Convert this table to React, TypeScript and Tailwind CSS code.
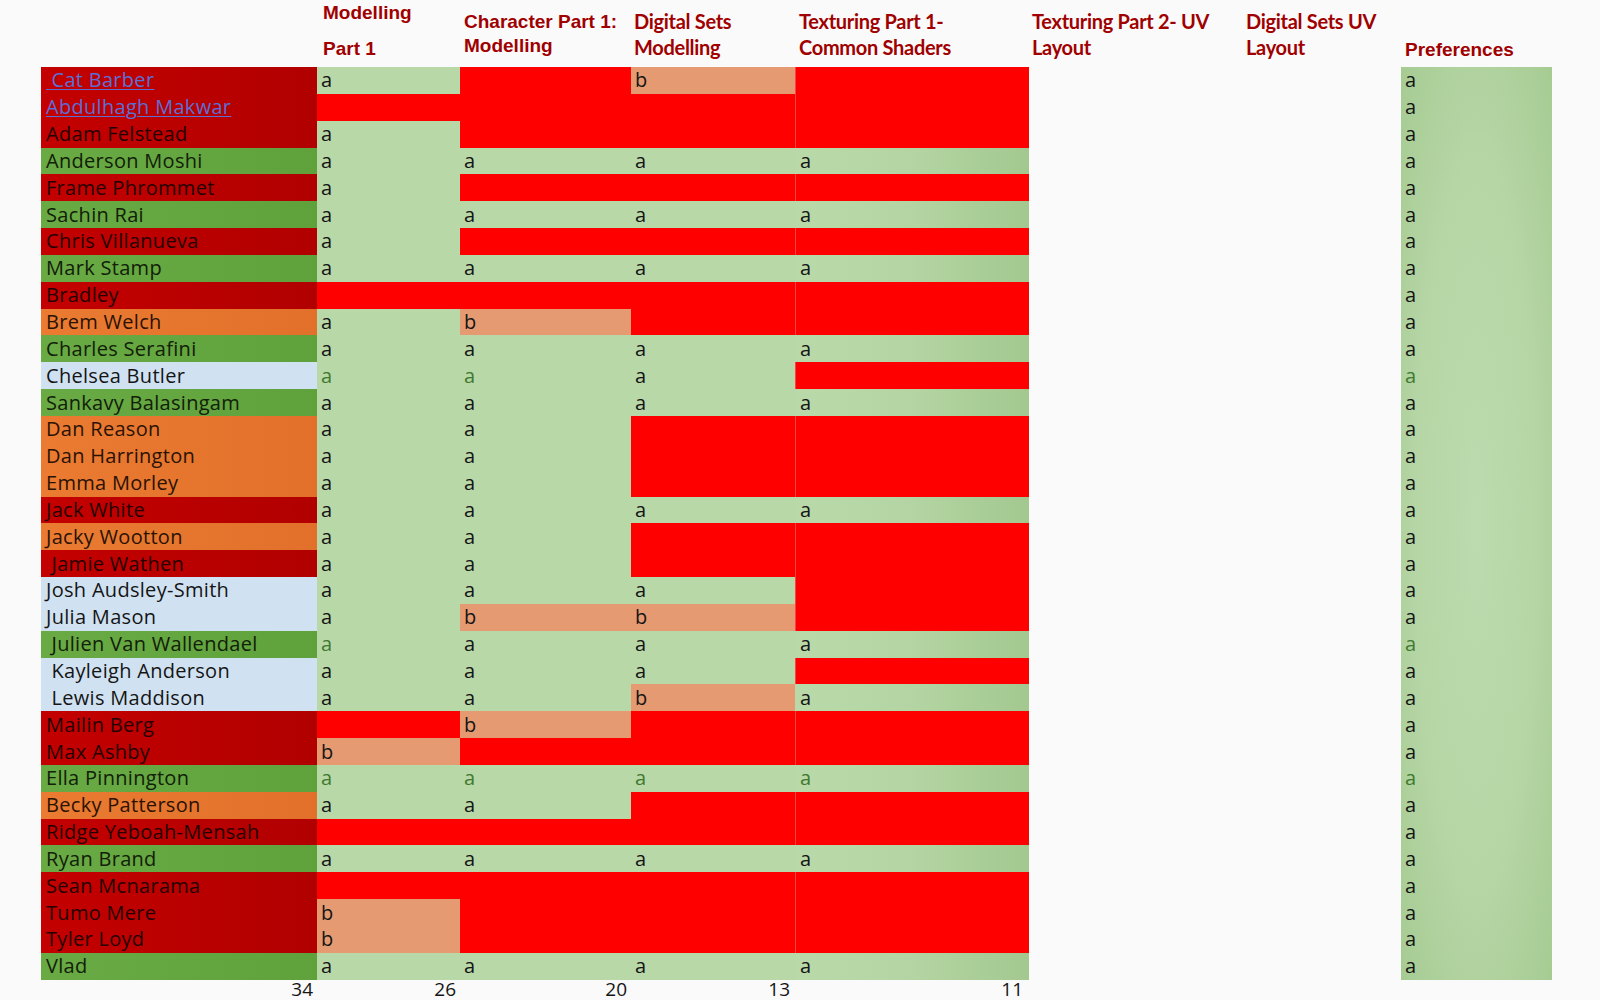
type Tone = 'red' | 'green' | 'orange' | 'blue';

interface Row {
  name: string;
  tone: Tone;
  cells: string; // modelling, character, digital sets, texturing: a / b / r
  link?: boolean;
  soft?: string; // cells whose "a" is printed in a faded green
}

const rows: Row[] = [
  { name: ' Cat Barber', tone: 'red', cells: 'arbr', link: true },
  { name: 'Abdulhagh Makwar', tone: 'red', cells: 'rrrr', link: true },
  { name: 'Adam Felstead', tone: 'red', cells: 'arrr' },
  { name: 'Anderson Moshi', tone: 'green', cells: 'aaaa' },
  { name: 'Frame Phrommet', tone: 'red', cells: 'arrr' },
  { name: 'Sachin Rai', tone: 'green', cells: 'aaaa' },
  { name: 'Chris Villanueva', tone: 'red', cells: 'arrr' },
  { name: 'Mark Stamp', tone: 'green', cells: 'aaaa' },
  { name: 'Bradley', tone: 'red', cells: 'rrrr' },
  { name: 'Brem Welch', tone: 'orange', cells: 'abrr' },
  { name: 'Charles Serafini', tone: 'green', cells: 'aaaa' },
  { name: 'Chelsea Butler', tone: 'blue', cells: 'aaar', soft: '01p' },
  { name: 'Sankavy Balasingam', tone: 'green', cells: 'aaaa' },
  { name: 'Dan Reason', tone: 'orange', cells: 'aarr' },
  { name: 'Dan Harrington', tone: 'orange', cells: 'aarr' },
  { name: 'Emma Morley', tone: 'orange', cells: 'aarr' },
  { name: 'Jack White', tone: 'red', cells: 'aaaa' },
  { name: 'Jacky Wootton', tone: 'orange', cells: 'aarr' },
  { name: ' Jamie Wathen', tone: 'red', cells: 'aarr' },
  { name: 'Josh Audsley-Smith', tone: 'blue', cells: 'aaar' },
  { name: 'Julia Mason', tone: 'blue', cells: 'abbr' },
  { name: ' Julien Van Wallendael', tone: 'green', cells: 'aaaa', soft: '0p' },
  { name: ' Kayleigh Anderson', tone: 'blue', cells: 'aaar' },
  { name: ' Lewis Maddison', tone: 'blue', cells: 'aaba' },
  { name: 'Mailin Berg', tone: 'red', cells: 'rbrr' },
  { name: 'Max Ashby', tone: 'red', cells: 'brrr' },
  { name: 'Ella Pinnington', tone: 'green', cells: 'aaaa', soft: '0123p' },
  { name: 'Becky Patterson', tone: 'orange', cells: 'aarr' },
  { name: 'Ridge Yeboah-Mensah', tone: 'red', cells: 'rrrr' },
  { name: 'Ryan Brand', tone: 'green', cells: 'aaaa' },
  { name: 'Sean Mcnarama', tone: 'red', cells: 'rrrr' },
  { name: 'Tumo Mere', tone: 'red', cells: 'brrr' },
  { name: 'Tyler Loyd', tone: 'red', cells: 'brrr' },
  { name: 'Vlad', tone: 'green', cells: 'aaaa' },
];

const toneClass: Record<Tone, string> = {
  red: 'bg-linear-to-r from-[#c40000] to-[#b10000] text-[#240000]',
  green: 'bg-linear-to-r from-[#69aa44] to-[#5fa23c] text-[#122008]',
  orange: 'bg-linear-to-r from-[#ea7b31] to-[#e2702b] text-[#2a1204]',
  blue: 'bg-[#d0e2f2] text-[#151515]',
};

const colWidths = ['w-[143px]', 'w-[171px]', 'w-[164px]', 'w-[234px]'];

function cellClass(v: string, col: number) {
  if (v === 'r') return 'bg-[#fe0000]';
  if (v === 'b') return 'bg-[#e69a72]';
  // texturing column gets darker toward its right edge
  if (col === 3) return 'bg-linear-to-r from-[#b9d9a9] via-[#b4d5a3] to-[#a3c88f]';
  return 'bg-[#b8d8a8]';
}

const body = "font-['Open_Sans',sans-serif] text-[20px]";
const nameText = 'tracking-[0.3px]';
const hArial = "font-['Liberation_Sans',Arial,sans-serif] font-bold text-[19px] tracking-normal text-[#a00000]";
const hNarrow = "font-['Lato',sans-serif] font-bold text-[20px] tracking-[-0.3px] text-[#a00000]";

function NameCell({ row }: { row: Row }) {
  return (
    <div className={`flex w-[276px] items-center whitespace-pre pl-[5px] ${nameText} ${toneClass[row.tone]}`}>
      {row.link ? (
        <span className="text-[#5a6fd6] underline decoration-1 underline-offset-2">{row.name}</span>
      ) : (
        row.name
      )}
    </div>
  );
}

export default function App() {
  return (
    <div className={`h-[1000px] w-[1600px] overflow-hidden bg-[#fafafa] ${body}`}>
      {/* Column headings */}
      <div className="flex h-[67px] pl-[41px]">
        <div className="w-[276px]" />
        <div className={`w-[143px] pl-[6px] ${hArial}`}>
          <div className="pt-[2px] leading-[22px]">Modelling</div>
          <div className="mt-[14px] leading-[22px]">Part 1</div>
        </div>
        <div className={`w-[171px] pl-[4px] pt-[10px] leading-[24px] ${hArial}`}>
          <div>Character Part 1:</div>
          <div>Modelling</div>
        </div>
        <div className={`w-[164px] pl-[3px] pt-[8px] leading-[26px] ${hNarrow}`}>
          <div>Digital Sets</div>
          <div>Modelling</div>
        </div>
        <div className={`w-[234px] pl-[4px] pt-[8px] leading-[26px] ${hNarrow}`}>
          <div>Texturing Part 1-</div>
          <div>Common Shaders</div>
        </div>
        <div className={`w-[213px] pl-[3px] pt-[8px] leading-[26px] ${hNarrow}`}>
          <div>Texturing Part 2- UV</div>
          <div>Layout</div>
        </div>
        <div className={`w-[159px] pl-[4px] pt-[8px] leading-[26px] ${hNarrow}`}>
          <div>Digital Sets UV</div>
          <div>Layout</div>
        </div>
        <div className={`w-[151px] pl-[4px] pt-[37px] leading-[26px] ${hArial}`}>Preferences</div>
      </div>

      {/* Table body */}
      <div className="flex pl-[41px]">
        <div className="flex w-[988px] flex-col">
          {rows.map((row) => (
            <div key={row.name} className="flex h-[26.85px]">
              <NameCell row={row} />
              {row.cells.split('').map((v, i) => (
                <div
                  key={i}
                  className={`flex items-center pl-[4px] ${colWidths[i]} ${cellClass(v, i)} ${
                    i === 3 ? 'border-l border-[#ffffff40]' : ''
                  } ${row.soft?.includes(String(i)) ? 'text-[#3f7a30]' : 'text-[#151515]'}`}
                >
                  {v === 'r' ? '' : v}
                </div>
              ))}
            </div>
          ))}
        </div>
        <div className="w-[372px]" />
        <div className="flex w-[151px] flex-col bg-[radial-gradient(ellipse_at_center,#bcdbae_0%,#b6d6a6_55%,#a6cb92_100%)]">
          {rows.map((row) => (
            <div
              key={row.name}
              className={`flex h-[26.85px] items-center pl-[4px] ${
                row.soft?.includes('p') ? 'text-[#3f7a30]' : 'text-[#151515]'
              }`}
            >
              a
            </div>
          ))}
        </div>
      </div>

      {/* Totals */}
      <div className="flex pl-[41px] text-[19px] leading-[18px] text-[#151515]">
        <div className="w-[276px] pr-[4px] text-right">34</div>
        <div className="w-[143px] pr-[4px] text-right">26</div>
        <div className="w-[171px] pr-[4px] text-right">20</div>
        <div className="w-[164px] pr-[5px] text-right">13</div>
        <div className="w-[234px] pr-[6px] text-right">11</div>
      </div>
    </div>
  );
}
